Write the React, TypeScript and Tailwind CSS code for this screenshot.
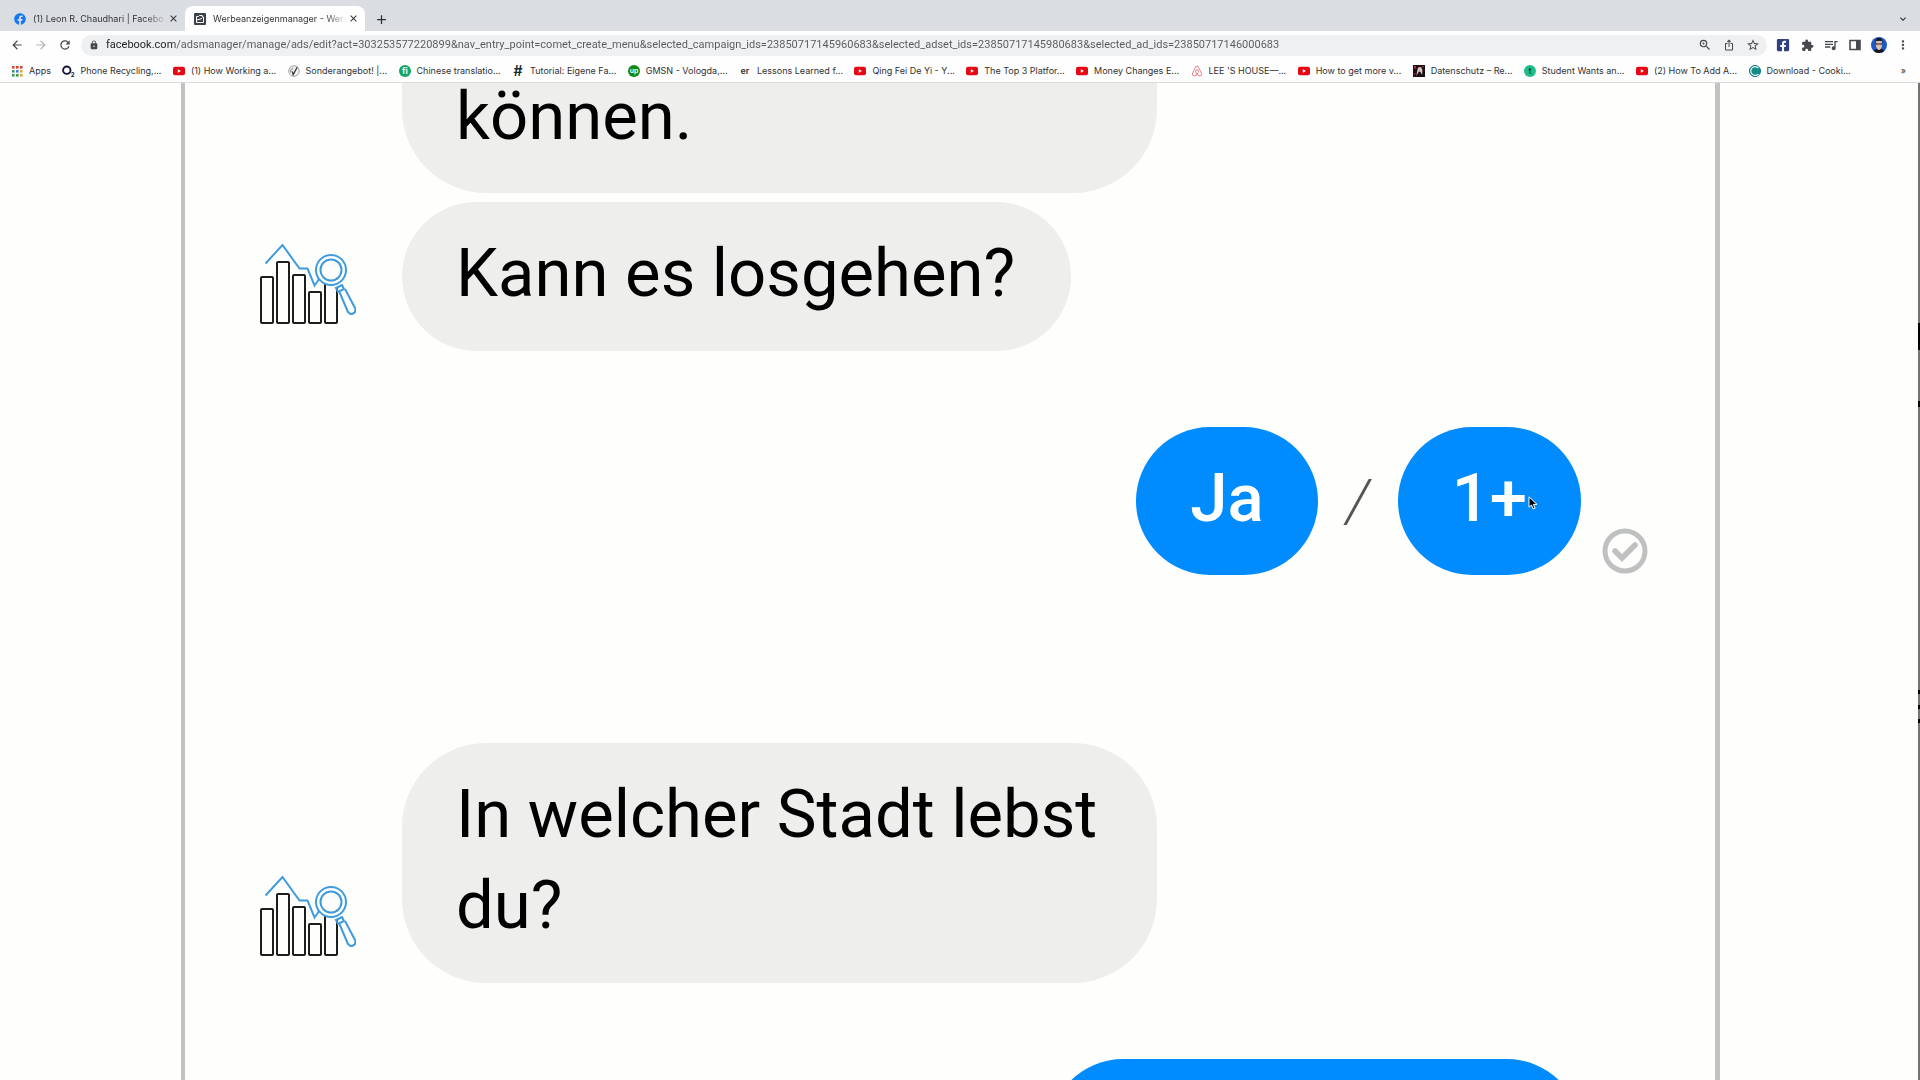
import type { ReactNode } from "react";
import { FaAirbnb, FaFacebook, FaFacebookSquare } from "react-icons/fa";
import {
  MdAdd,
  MdArrowBack,
  MdArrowForward,
  MdClose,
  MdExpandMore,
  MdExtension,
  MdIosShare,
  MdLock,
  MdMoreVert,
  MdQueueMusic,
  MdRefresh,
  MdStarBorder,
  MdZoomIn,
} from "react-icons/md";

const URL_TEXT =
  "facebook.com/adsmanager/manage/ads/edit?act=303253577220899&nav_entry_point=comet_create_menu&selected_campaign_ids=23850717145960683&selected_adset_ids=23850717145980683&selected_ad_ids=23850717146000683";

/* ---------- bookmark icons ---------- */

function AppsIcon() {
  const colors = ["#d9453a", "#d9453a", "#d9453a", "#3a9a52", "#3f7fe0", "#e0a52a", "#3a9a52", "#3a9a52", "#e0a52a"];
  return (
    <svg viewBox="0 0 12 12" className="size-3">
      {colors.map((c, i) => (
        <rect key={i} x={1 + (i % 3) * 4} y={1 + Math.floor(i / 3) * 4} width="2.6" height="2.6" fill={c} />
      ))}
    </svg>
  );
}

function YoutubeIcon() {
  return (
    <svg viewBox="0 0 12 12" className="size-3">
      <rect y="1.7" width="12" height="8.6" rx="2" fill="#e50914" />
      <path d="M4.8 4.2 8 6 4.8 7.8z" fill="#fff" />
    </svg>
  );
}

function O2Icon() {
  return (
    <svg viewBox="0 0 12 12" className="size-3 overflow-visible font-bold" fill="#14163a">
      <circle cx="4.8" cy="5.2" r="3.7" fill="none" stroke="#14163a" strokeWidth="1.9" />
      <text x="8.8" y="11.8" fontSize="6">
        2
      </text>
    </svg>
  );
}

function PenIcon() {
  return (
    <svg viewBox="0 0 12 12" className="size-3">
      <circle cx="6" cy="6" r="5.3" fill="#f2f2f2" stroke="#999" strokeWidth="0.9" />
      <path d="M9.2 2.2 5.2 9.6 4.2 6.4" fill="none" stroke="#333" strokeWidth="1.3" />
      <path d="M2.6 7.4q-.4-3.400 2.600-4.600" fill="none" stroke="#666" strokeWidth="0.9" />
    </svg>
  );
}

/* site icon made of a letter or two, optionally on a coloured disc */
function LetterIcon({ text, color, disc, size }: { text: string; color: string; disc?: string; size: number }) {
  return (
    <svg viewBox="0 0 12 12" className="size-3 overflow-visible font-semibold">
      {disc && <circle cx="6" cy="6" r="6" fill={disc} />}
      <text x="6" y="6" dy="0.34em" textAnchor="middle" fontSize={size} fill={color}>
        {text}
      </text>
    </svg>
  );
}

function PosterIcon() {
  return (
    <svg viewBox="0 0 12 12" className="size-3">
      <rect width="12" height="12" fill="#1c1014" />
      <path d="m5 2.500 3-.5 1.500 3-.5 5-1.500-3L6 6.500 5 8l-1.500 3 .5-4z" fill="#d9c4c4" />
      <path d="M1 1h2v2.500H1zM9 1h2l-1 2zM1 8h1.500l-.7 3z" fill="#b3263a" />
    </svg>
  );
}

function CookieIcon() {
  return (
    <svg viewBox="0 0 12 12" className="size-3">
      <circle cx="6" cy="6" r="5.500" fill="#128c86" stroke="#0b6f80" strokeWidth="1" />
      <path d="M9.400 3a4.400 4.400 0 1 0 0 6" fill="none" stroke="#fff" strokeWidth="1.1" />
    </svg>
  );
}

const bookmarks: { label: string; icon: ReactNode }[] = [
  { label: "Apps", icon: <AppsIcon /> },
  { label: "Phone Recycling,...", icon: <O2Icon /> },
  { label: "(1) How Working a...", icon: <YoutubeIcon /> },
  { label: "Sonderangebot! |...", icon: <PenIcon /> },
  { label: "Chinese translatio...", icon: <LetterIcon text="fi" color="#fff" disc="#13a566" size={9} /> },
  { label: "Tutorial: Eigene Fa...", icon: <LetterIcon text="#" color="#16262b" size={14} /> },
  { label: "GMSN - Vologda,...", icon: <LetterIcon text="up" color="#fff" disc="#128a12" size={7} /> },
  { label: "Lessons Learned f...", icon: <LetterIcon text="er" color="#333" size={9} /> },
  { label: "Qing Fei De Yi - Y...", icon: <YoutubeIcon /> },
  { label: "The Top 3 Platfor...", icon: <YoutubeIcon /> },
  { label: "Money Changes E...", icon: <YoutubeIcon /> },
  { label: "LEE 'S HOUSE—...", icon: <FaAirbnb className="size-3 text-[#e0565b]" /> },
  { label: "How to get more v...", icon: <YoutubeIcon /> },
  { label: "Datenschutz – Re...", icon: <PosterIcon /> },
  { label: "Student Wants an...", icon: <LetterIcon text="t" color="#0d4f3c" disc="#1dbf86" size={9} /> },
  { label: "(2) How To Add A...", icon: <YoutubeIcon /> },
  { label: "Download - Cooki...", icon: <CookieIcon /> },
];

/* ---------- browser chrome ---------- */

function Tab({ title, icon, active }: { title: string; icon: ReactNode; active?: boolean }) {
  return (
    <div
      className={
        active
          ? "flex h-[25px] w-[180px] items-center rounded-t-lg bg-[#fefefe] pl-[9px] pr-1.5"
          : "flex h-[25px] w-[180px] items-center pl-[9px] pr-1.5"
      }
    >
      {icon}
      <span className="ml-[7px] whitespace-nowrap bg-[linear-gradient(90deg,#2c2e31_112px,#2c2e3130_131px)] bg-clip-text text-[9px] text-transparent">
        {title}
      </span>
      <button aria-label="Close tab" className="ml-auto text-[#2c2e31]">
        <MdClose className="size-[11px]" />
      </button>
    </div>
  );
}

function TabStrip() {
  return (
    <div className="flex h-[31px] items-end bg-[#dadde2] pl-[5px] pr-[11px]">
      <Tab title="(1) Leon R. Chaudhari | Facebo" icon={<FaFacebook className="size-3 shrink-0 text-[#1877f2]" />} />
      <Tab
        active
        title="Werbeanzeigenmanager - Wer"
        icon={
          <svg viewBox="0 0 12 12" className="size-3 shrink-0">
            <rect width="12" height="12" rx="1" fill="#3d4148" />
            <path d="M2.500 9.500v-6h2l.8-1h3v1.500h1.200v5.500zM3 7l5-1.500" fill="none" stroke="#fff" strokeWidth="1" />
          </svg>
        }
      />
      <button aria-label="New tab" className="mb-1 ml-[9px] text-[#2c2e31]">
        <MdAdd className="size-[15px]" />
      </button>
      <button aria-label="Search tabs" className="mb-1.5 ml-auto text-[#2c2e31]">
        <MdExpandMore className="size-3" />
      </button>
    </div>
  );
}

function IconButton({ label, children }: { label: string; children: ReactNode }) {
  return (
    <button aria-label={label} className="flex size-6 shrink-0 items-center justify-center">
      {children}
    </button>
  );
}

function Toolbar() {
  return (
    <div className="flex h-7 items-center bg-[#fefefe] pl-[5px] pr-[5px] text-[#46494d]">
      <IconButton label="Back">
        <MdArrowBack className="size-[14px]" />
      </IconButton>
      <IconButton label="Forward">
        <MdArrowForward className="size-[14px] text-[#b4b6b9]" />
      </IconButton>
      <IconButton label="Reload">
        <MdRefresh className="size-[14px]" />
      </IconButton>
      <div className="ml-1 mr-1 flex h-[21px] flex-1 items-center rounded-full bg-[#eff0f2] pl-2 pr-0.5">
        <MdLock className="size-[10px] shrink-0" />
        {/* the domain part is darker than the path */}
        <input
          aria-label="Address"
          readOnly
          value={URL_TEXT}
          className="ml-[7px] min-w-0 flex-1 bg-[linear-gradient(90deg,#1f2023_69px,#56595d_69px)] bg-clip-text font-[Roboto,sans-serif] text-[11px] text-transparent outline-none"
        />
        <IconButton label="Zoom">
          <MdZoomIn className="size-[14px]" />
        </IconButton>
        <IconButton label="Share">
          <MdIosShare className="size-3" />
        </IconButton>
        <IconButton label="Bookmark">
          <MdStarBorder className="size-[14px]" />
        </IconButton>
      </div>
      <IconButton label="Facebook extension">
        <FaFacebookSquare className="size-[14px] text-[#2b4180]" />
      </IconButton>
      <IconButton label="Extensions">
        <MdExtension className="size-[13px]" />
      </IconButton>
      <IconButton label="Media">
        <MdQueueMusic className="size-[16px]" />
      </IconButton>
      <IconButton label="Side panel">
        <svg viewBox="0 0 12 12" className="size-3">
          <path d="M1 1.500h10v9H1z" fill="none" stroke="currentColor" strokeWidth="1.600" />
          <path d="M7 1.500h4v9H7z" fill="currentColor" />
        </svg>
      </IconButton>
      <IconButton label="Profile">
        <svg viewBox="0 0 16 16" className="size-4 rounded-full">
          <rect width="16" height="16" fill="#1b59c4" />
          <path d="M2 16q1-4.500 6-4.500t6 4.500z" fill="#15171d" />
          <path d="M5 4h6v5q-1 4-3 4T5 9z" fill="#e3bfa8" />
          <path d="M4.500 6q-.5-5 3.500-5T11.500 6L10.500 3.800h-5z" fill="#1a1412" />
          <path d="M5 6.400h2.400v1.200H5.400zM8.600 6.400H11l-.4 1.200h-2z" fill="none" stroke="#222" strokeWidth="0.6" />
        </svg>
      </IconButton>
      <IconButton label="Menu">
        <MdMoreVert className="size-[14px]" />
      </IconButton>
    </div>
  );
}

function BookmarksBar() {
  return (
    <nav className="flex h-6 items-center border-b border-[#dcdcdc] bg-[#fefefe] pl-[11px] pr-[14px] text-[9px] text-[#2f3134]">
      <div className="mr-[50px] flex flex-1 items-center justify-between gap-1">
        {bookmarks.map((b) => (
          <a key={b.label} href="#" className="flex shrink-0 items-center gap-1.5 whitespace-nowrap">
            {b.icon}
            {b.label}
          </a>
        ))}
      </div>
      <button aria-label="More bookmarks">»</button>
    </nav>
  );
}

/* ---------- chat ---------- */

function Avatar() {
  return (
    <svg viewBox="0 0 96 80" className="mb-[27px] mr-[46px] h-20 w-24 shrink-0" fill="none" strokeWidth="2">
      <g stroke="#1d1d1d">
        <rect x="1" y="33" width="12" height="46" rx="1" />
        <rect x="17" y="18" width="12" height="61" rx="1" />
        <rect x="33" y="31" width="12" height="48" rx="1" />
        <rect x="49" y="48" width="12" height="31" rx="1" />
        <path d="M65 40v38q0 1 1 1h10q1 0 1-1V43" />
      </g>
      <g stroke="#3f9bdc">
        <path d="M5.500 19.500 22.500 1l17 23.500h8l7 17 5-7" />
        <circle cx="71" cy="26" r="15" />
        <circle cx="71" cy="26" r="10.500" />
        <path d="m76 44 6-3 2 4-6 3zM79.500 48l8 19q2 4 5.500 2.500t2-5.500L85 45" />
      </g>
    </svg>
  );
}

function Incoming({ children }: { children: ReactNode }) {
  return (
    <div className="flex items-end pl-[75px]">
      <Avatar />
      <p className="max-w-[755px] rounded-[84px] bg-[#eeeeed] pb-8 pl-[54px] pr-14 pt-[26px] text-black">{children}</p>
    </div>
  );
}

function Reply({ children }: { children: ReactNode }) {
  return (
    <button className="relative rounded-[84px] bg-[#008cff] px-[54px] pb-[31px] pt-[26px] font-medium text-white">
      {children}
    </button>
  );
}

function Chat() {
  return (
    <section className="flex min-w-0 flex-1 flex-col overflow-hidden border-l-4 border-r-[5px] border-[#c2c2c2] font-[Roboto,sans-serif] text-[67px] leading-[91px]">
      {/* tail of a message that is scrolled out at the top */}
      <div className="flex pl-[217px]">
        <p className="w-[755px] rounded-b-[84px] bg-[#eeeeed] pb-11 pl-[54px] pr-14 leading-[66px] text-black">können.</p>
      </div>
      <div className="mt-[9px]">
        <Incoming>Kann es losgehen?</Incoming>
      </div>

      <div className="mt-[76px] flex items-end justify-end pr-[67px]">
        <Reply>Ja</Reply>
        <span className="w-20 pb-[29px] text-center text-[60px] font-light italic text-[#555]">/</span>
        <Reply>
          1+
          {/* mouse pointer */}
          <svg viewBox="0 0 10 14" className="absolute right-[43px] top-[69px] h-[14px] w-[10px]">
            <path d="M1 .8v10.400l2.500-2.200 1.700 4 1.900-.8L5.400 8.400H9z" fill="#000" stroke="#fff" strokeWidth="1" />
          </svg>
        </Reply>
        <svg viewBox="0 0 46 46" className="mb-px ml-[21px] size-[46px]" fill="none" stroke="#bfc0c0">
          <circle cx="23" cy="23" r="20" strokeWidth="5" />
          <path d="m13 23 7 7 13-13" strokeWidth="5.500" strokeLinecap="round" />
        </svg>
      </div>

      <div className="mt-[168px]">
        <Incoming>In welcher Stadt lebst du?</Incoming>
      </div>

      <div className="mt-[76px] flex justify-end pr-[134px]">
        <div className="h-[148px] w-[532px] shrink-0 rounded-[84px] bg-[#008cff]" />
      </div>
    </section>
  );
}

/* sliver of the neighbouring window along the right edge */
function EdgeSliver() {
  return (
    <div className="flex w-0.5 shrink-0 flex-col bg-[#747474]">
      <div className="mt-[240px] h-[27px] bg-black" />
      <div className="mt-[51px] h-[6px] bg-black" />
      <div className="mt-[283px] h-1 bg-black" />
      <div className="mt-[11px] h-1 bg-black" />
      <div className="mt-[10px] h-1 bg-black" />
    </div>
  );
}

export default function App() {
  return (
    <div className="flex h-screen flex-col overflow-hidden bg-[#fefefd] font-[Inter,sans-serif]">
      <header className="shrink-0">
        <TabStrip />
        <Toolbar />
        <BookmarksBar />
      </header>
      <main className="flex min-h-0 flex-1">
        <div className="flex min-w-0 flex-1 pl-[181px] pr-[198px]">
          <Chat />
        </div>
        <EdgeSliver />
      </main>
    </div>
  );
}
